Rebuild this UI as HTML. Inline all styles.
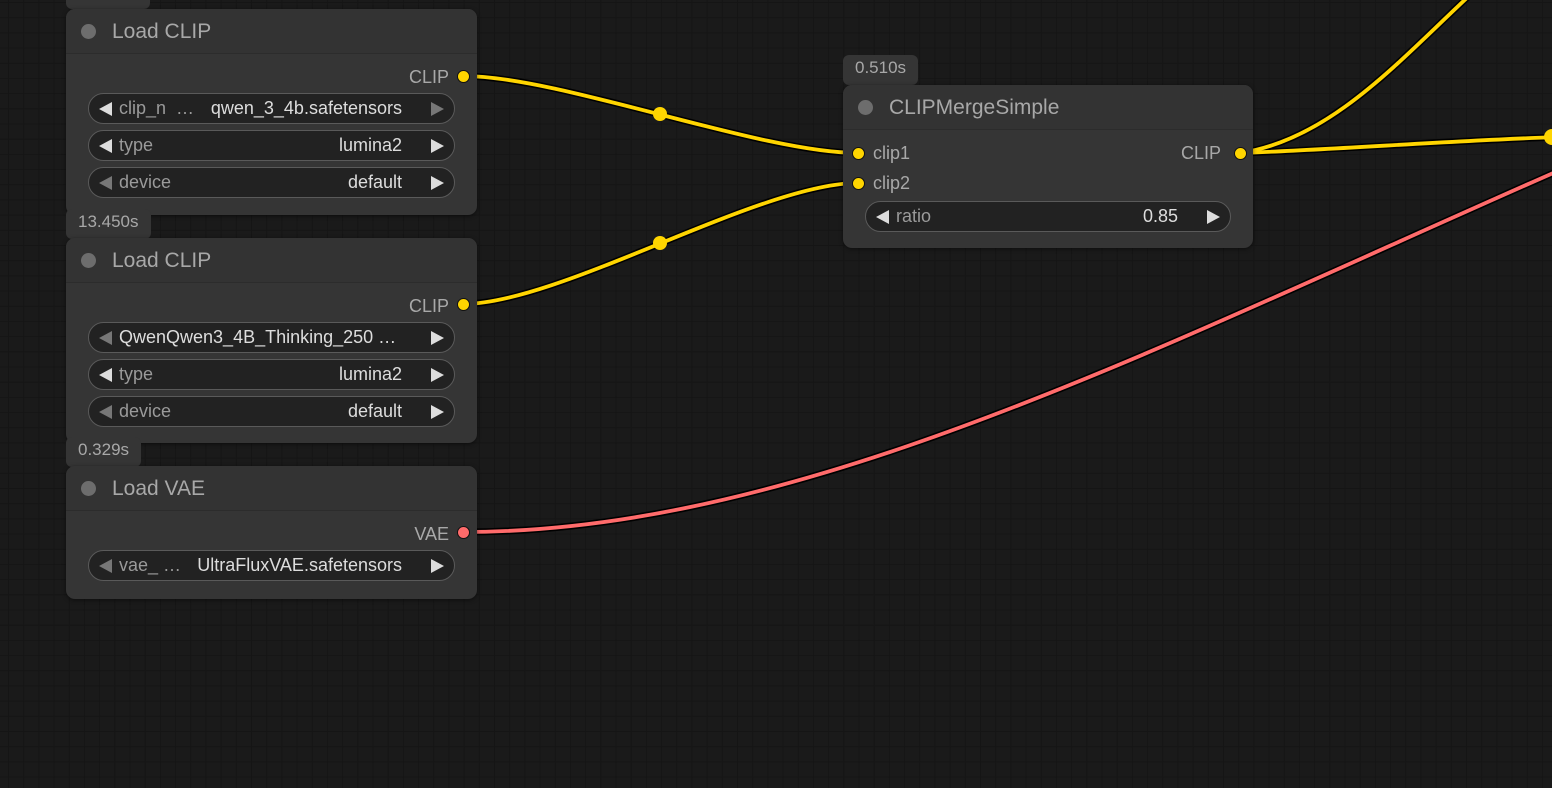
<!DOCTYPE html>
<html><head><style>
*{margin:0;padding:0;box-sizing:border-box}
body{width:1552px;height:788px;overflow:hidden;position:relative;background:#1a1a1a;font-family:"Liberation Sans",sans-serif;
background-image:linear-gradient(90deg,#151515 1px,transparent 1px),linear-gradient(#151515 1px,transparent 1px);
background-size:15.2px 15.2px;background-position:8px 2px;}
.node{position:absolute;background:#353535;border-radius:9px;box-shadow:0 1px 4px rgba(0,0,0,.5)}
.title{height:45px;border-bottom:1px solid #2c2c2c;color:#a8a8a8;font-size:21px;line-height:45px;padding-left:46px;position:relative;background:#333;border-radius:9px 9px 0 0}
.title::before{content:"";position:absolute;left:15px;top:15px;width:15px;height:15px;border-radius:50%;background:#6d6d6d}
.badge{position:absolute;background:#353535;color:#a8a8a8;font-size:17px;border-radius:6px;padding:0 12px;line-height:26px;height:30px}
.out{position:absolute;right:28px;color:#a8a8a8;font-size:18px}
.dot{position:absolute;width:13px;height:13px;border-radius:50%;background:#ffd500;border:1.5px solid #111}
.w{position:absolute;left:22px;right:22px;height:31px;border-radius:16px;background:#222;border:1px solid #5a5a5a;font-size:18px;line-height:29px;color:#9a9a9a}
.w .l{position:absolute;left:30px}
.w .v{position:absolute;right:52px;color:#ddd}
.w .al,.w .ar{position:absolute;top:8px;width:0;height:0;border-top:7px solid transparent;border-bottom:7px solid transparent}
.w .al{left:10px;border-right:13px solid #ddd}
.w .ar{right:10px;border-left:13px solid #ddd}
.w .dim{border-right-color:#777}.w .dimr{border-left-color:#777}
</style></head><body>
<svg width="1552" height="788" style="position:absolute;left:0;top:0">
<g fill="none" stroke-linecap="round">
<g stroke="#000" stroke-width="7">
<path d="M463,76 C560,76 760,153 858,153"/>
<path d="M463,304 C560,304 760,183 858,183"/>
<path d="M1240,153 C1330,150 1460,140 1560,137"/>
<path d="M1240,153 C1330,140 1400,60 1470,-5"/>
<path d="M463,532 C800,532 1150,350 1560,170"/>
</g>
<g stroke="#ffd500" stroke-width="3.8">
<path d="M463,76 C560,76 760,153 858,153"/>
<path d="M463,304 C560,304 760,183 858,183"/>
<path d="M1240,153 C1330,150 1460,140 1560,137"/>
<path d="M1240,153 C1330,140 1400,60 1470,-5"/>
</g>
<path stroke="#ff6b6b" stroke-width="3.8" d="M463,532 C800,532 1150,350 1560,170"/>
</g>
<circle cx="660" cy="114" r="7" fill="#ffd500"/>
<circle cx="660" cy="243" r="7" fill="#ffd500"/>
<circle cx="1552" cy="137" r="8" fill="#ffd500"/>
</svg>

<div class="badge" style="left:66px;top:-21px;width:84px"></div>
<div class="node" style="left:66px;top:9px;width:411px;height:206px">
<div class="title">Load CLIP</div>
<div class="out" style="top:58px">CLIP</div>
<div class="dot" style="left:391px;top:61px"></div>
<div class="w" style="top:84px"><span class="al"></span><span class="l">clip_n &nbsp;…</span><span class="v" style="right:52px">qwen_3_4b.safetensors</span><span class="ar dimr"></span></div>
<div class="w" style="top:121px"><span class="al"></span><span class="l">type</span><span class="v">lumina2</span><span class="ar"></span></div>
<div class="w" style="top:158px"><span class="al dim"></span><span class="l">device</span><span class="v">default</span><span class="ar"></span></div>
</div>

<div class="badge" style="left:66px;top:209px">13.450s</div>
<div class="node" style="left:66px;top:238px;width:411px;height:205px">
<div class="title">Load CLIP</div>
<div class="out" style="top:58px">CLIP</div>
<div class="dot" style="left:391px;top:60px"></div>
<div class="w" style="top:84px"><span class="al dim"></span><span class="v" style="left:30px;right:auto">QwenQwen3_4B_Thinking_250 …</span><span class="ar"></span></div>
<div class="w" style="top:121px"><span class="al"></span><span class="l">type</span><span class="v">lumina2</span><span class="ar"></span></div>
<div class="w" style="top:158px"><span class="al dim"></span><span class="l">device</span><span class="v">default</span><span class="ar"></span></div>
</div>

<div class="badge" style="left:66px;top:437px">0.329s</div>
<div class="node" style="left:66px;top:466px;width:411px;height:133px">
<div class="title">Load VAE</div>
<div class="out" style="top:58px">VAE</div>
<div class="dot" style="left:391px;top:60px;background:#ff6b6b"></div>
<div class="w" style="top:84px"><span class="al dim"></span><span class="l">vae_ …</span><span class="v">UltraFluxVAE.safetensors</span><span class="ar"></span></div>
</div>

<div class="badge" style="left:843px;top:55px">0.510s</div>
<div class="node" style="left:843px;top:85px;width:410px;height:163px">
<div class="title">CLIPMergeSimple</div>
<div class="dot" style="left:9px;top:62px"></div>
<div style="position:absolute;left:30px;top:58px;color:#a8a8a8;font-size:18px">clip1</div>
<div class="dot" style="left:9px;top:92px"></div>
<div style="position:absolute;left:30px;top:88px;color:#a8a8a8;font-size:18px">clip2</div>
<div class="out" style="top:58px;right:32px">CLIP</div>
<div class="dot" style="left:391px;top:62px"></div>
<div class="w" style="top:116px"><span class="al"></span><span class="l">ratio</span><span class="v">0.85</span><span class="ar"></span></div>
</div>
</body></html>
